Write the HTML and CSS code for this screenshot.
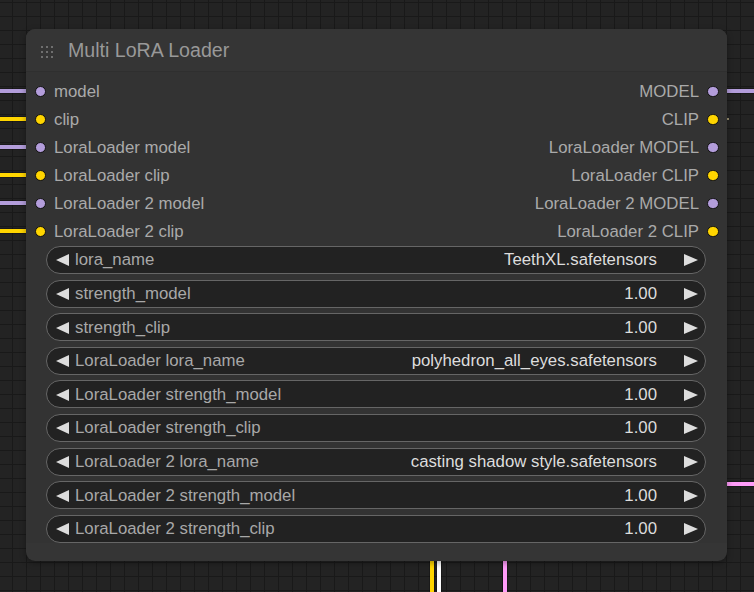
FILE: index.html
```html
<!DOCTYPE html>
<html>
<head>
<meta charset="utf-8">
<link rel="stylesheet" href="styles.css">
</head>
<body>
<div class="canvas">
  <div class="link h model-c" style="left:0;top:89px;width:30px"></div>
  <div class="link h clip-c" style="left:0;top:117px;width:30px"></div>
  <div class="link h model-c" style="left:0;top:145px;width:30px"></div>
  <div class="link h clip-c" style="left:0;top:173px;width:30px"></div>
  <div class="link h model-c" style="left:0;top:201px;width:30px"></div>
  <div class="link h clip-c" style="left:0;top:229px;width:30px"></div>
  <div class="link h model-c" style="left:722px;top:89px;width:32px"></div>
  <div class="link h latent-c" style="left:722px;top:482px;width:32px"></div>
  <div class="link v clip-c" style="left:430px;top:550px;height:42px"></div>
  <div class="link v white-c" style="left:437px;top:550px;height:42px"></div>
  <div class="link v latent-c" style="left:503px;top:550px;height:42px"></div>
  <div class="speck"></div>

  <div class="node">
    <div class="title">
      <svg class="grip" width="12" height="12" viewBox="0 0 12 12">
        <rect x="0" y="0" width="2" height="2"/><rect x="5" y="0" width="2" height="2"/><rect x="10" y="0" width="2" height="2"/>
        <rect x="0" y="5" width="2" height="2"/><rect x="5" y="5" width="2" height="2"/><rect x="10" y="5" width="2" height="2"/>
        <rect x="0" y="10" width="2" height="2"/><rect x="5" y="10" width="2" height="2"/><rect x="10" y="10" width="2" height="2"/>
      </svg>
      <span class="title-text">Multi LoRA Loader</span>
    </div>
    <div class="body">
      <div class="slots">
        <div class="slot-row"><div class="in"><span class="dot model-c"></span>model</div><div class="out">MODEL<span class="dot model-c"></span></div></div>
        <div class="slot-row"><div class="in"><span class="dot clip-c"></span>clip</div><div class="out">CLIP<span class="dot clip-c"></span></div></div>
        <div class="slot-row"><div class="in"><span class="dot model-c"></span>LoraLoader model</div><div class="out">LoraLoader MODEL<span class="dot model-c"></span></div></div>
        <div class="slot-row"><div class="in"><span class="dot clip-c"></span>LoraLoader clip</div><div class="out">LoraLoader CLIP<span class="dot clip-c"></span></div></div>
        <div class="slot-row"><div class="in"><span class="dot model-c"></span>LoraLoader 2 model</div><div class="out">LoraLoader 2 MODEL<span class="dot model-c"></span></div></div>
        <div class="slot-row"><div class="in"><span class="dot clip-c"></span>LoraLoader 2 clip</div><div class="out">LoraLoader 2 CLIP<span class="dot clip-c"></span></div></div>
      </div>
      <div class="widgets">
        <div class="widget"><span class="arrow left"></span><span class="label">lora_name</span><span class="value">TeethXL.safetensors</span><span class="arrow right"></span></div>
        <div class="widget"><span class="arrow left"></span><span class="label">strength_model</span><span class="value">1.00</span><span class="arrow right"></span></div>
        <div class="widget"><span class="arrow left"></span><span class="label">strength_clip</span><span class="value">1.00</span><span class="arrow right"></span></div>
        <div class="widget"><span class="arrow left"></span><span class="label">LoraLoader lora_name</span><span class="value">polyhedron_all_eyes.safetensors</span><span class="arrow right"></span></div>
        <div class="widget"><span class="arrow left"></span><span class="label">LoraLoader strength_model</span><span class="value">1.00</span><span class="arrow right"></span></div>
        <div class="widget"><span class="arrow left"></span><span class="label">LoraLoader strength_clip</span><span class="value">1.00</span><span class="arrow right"></span></div>
        <div class="widget"><span class="arrow left"></span><span class="label">LoraLoader 2 lora_name</span><span class="value">casting shadow style.safetensors</span><span class="arrow right"></span></div>
        <div class="widget"><span class="arrow left"></span><span class="label">LoraLoader 2 strength_model</span><span class="value">1.00</span><span class="arrow right"></span></div>
        <div class="widget"><span class="arrow left"></span><span class="label">LoraLoader 2 strength_clip</span><span class="value">1.00</span><span class="arrow right"></span></div>
      </div>
    </div>
  </div>
</div>
</body>
</html>
```
FILE: styles.css
```css
* { box-sizing: border-box; }
html, body {
  margin: 0;
  padding: 0;
  width: 754px;
  height: 592px;
  overflow: hidden;
  background: #222;
  font-family: "Liberation Sans", Arial, sans-serif;
}
.canvas {
  position: relative;
  width: 754px;
  height: 592px;
  background-color: #232323;
  background-image:
    linear-gradient(to right, #191919 1px, transparent 1px),
    linear-gradient(to bottom, #191919 1px, transparent 1px);
  background-size: 14px 14px;
  background-position: 12px 2px;
}
.link {
  position: absolute;
}
.link.h { height: 4px; box-shadow: 0 0 0 0.5px rgba(0,0,0,0.5); }
.link.v { width: 4px; box-shadow: 0 0 0 0.5px rgba(0,0,0,0.5); }
.model-c { background: #b39ddb; }
.clip-c { background: #ffd500; }
.latent-c { background: #ff9cf9; }
.white-c { background: #ffffff; }
.speck {
  position: absolute;
  left: 727px;
  top: 118px;
  width: 2px;
  height: 2px;
  background: #9a9070;
}
.node {
  position: absolute;
  left: 26px;
  top: 29px;
  width: 701px;
  height: 532px;
  background: #353535;
  border-radius: 9px;
  box-shadow: 0 2px 6px rgba(0,0,0,0.35);
  overflow: hidden;
}
.title {
  height: 43px;
  display: flex;
  align-items: center;
  padding-left: 15px;
  padding-top: 2px;
  background: #353535;
  border-bottom: 1px solid #2f2f2f;
}
.grip { fill: #6f6f6f; margin-right: 15px; margin-top: 1px; }
.title-text {
  color: #999;
  font-size: 19.6px;
  line-height: 1;
}
.body {
  background: #333;
  padding-top: 5.6px;
}
.slot-row {
  height: 28px;
  display: flex;
  justify-content: space-between;
  align-items: center;
  font-size: 16.8px;
  color: #aaa;
}
.in, .out {
  display: flex;
  align-items: center;
}
.in { padding-left: 8.5px; }
.out { padding-right: 8.5px; }
.dot {
  width: 11.5px;
  height: 11.5px;
  border-radius: 50%;
  border: 1px solid #111;
  display: inline-block;
}
.in .dot { margin-right: 8px; }
.out .dot { margin-left: 8px; }
.widgets {
  margin-top: 0.4px;
  padding: 0 21px 0 20px;
  display: flex;
  flex-direction: column;
  gap: 5.6px;
}
.widget {
  height: 28px;
  border: 1px solid #666;
  border-radius: 14px;
  background: #222;
  display: flex;
  align-items: center;
  padding: 1px 7px 0 9px;
  font-size: 16.8px;
}
.arrow {
  width: 0;
  height: 0;
  border-top: 6.5px solid transparent;
  border-bottom: 6.5px solid transparent;
  flex: none;
}
.arrow.left { border-right: 13px solid #ddd; margin-right: 6px; }
.arrow.right { border-left: 14px solid #ddd; margin-left: 27px; }
.label { flex: 1; color: #a8a8a8; white-space: nowrap; }
.value { color: #ddd; white-space: nowrap; }
```
